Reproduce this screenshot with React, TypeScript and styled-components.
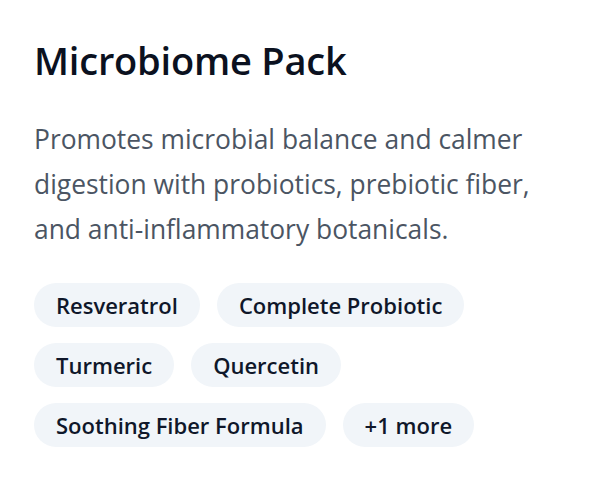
import React from 'react';
import styled, { createGlobalStyle } from 'styled-components';

const GlobalStyle = createGlobalStyle`
  html, body {
    margin: 0;
    padding: 0;
    background: #ffffff;
  }
  body {
    font-family: "Open Sans", "Noto Sans", sans-serif;
    -webkit-font-smoothing: antialiased;
  }
`;

const Card = styled.section`
  width: 595px;
  box-sizing: border-box;
  padding: 33px 40px 0 34px;
`;

const Title = styled.h2`
  margin: 0;
  font-size: 38px;
  line-height: 54px;
  font-weight: 600;
  color: #0b1120;
  letter-spacing: -0.2px;
`;

const Description = styled.p`
  margin: 30px 0 0;
  max-width: 512px;
  font-size: 26.4px;
  line-height: 45px;
  font-weight: 400;
  color: #4b5563;
`;

const TagList = styled.ul`
  list-style: none;
  margin: 31px 0 0;
  padding: 0;
  display: flex;
  flex-wrap: wrap;
  gap: 16px 17px;
  max-width: 470px;
`;

const Tag = styled.li`
  display: inline-flex;
  align-items: center;
  height: 44px;
  padding: 0 22px;
  border-radius: 999px;
  background: #f1f5f9;
  color: #0f172a;
  font-size: 22px;
  font-weight: 600;
  white-space: nowrap;
`;

const tags = [
  'Resveratrol',
  'Complete Probiotic',
  'Turmeric',
  'Quercetin',
  'Soothing Fiber Formula',
  '+1 more',
];

export default function App() {
  return (
    <>
      <GlobalStyle />
      <Card>
        <Title>Microbiome Pack</Title>
        <Description>
          Promotes microbial balance and calmer digestion with probiotics,
          prebiotic fiber, and anti-inflammatory botanicals.
        </Description>
        <TagList>
          {tags.map((tag) => (
            <Tag key={tag}>{tag}</Tag>
          ))}
        </TagList>
      </Card>
    </>
  );
}
